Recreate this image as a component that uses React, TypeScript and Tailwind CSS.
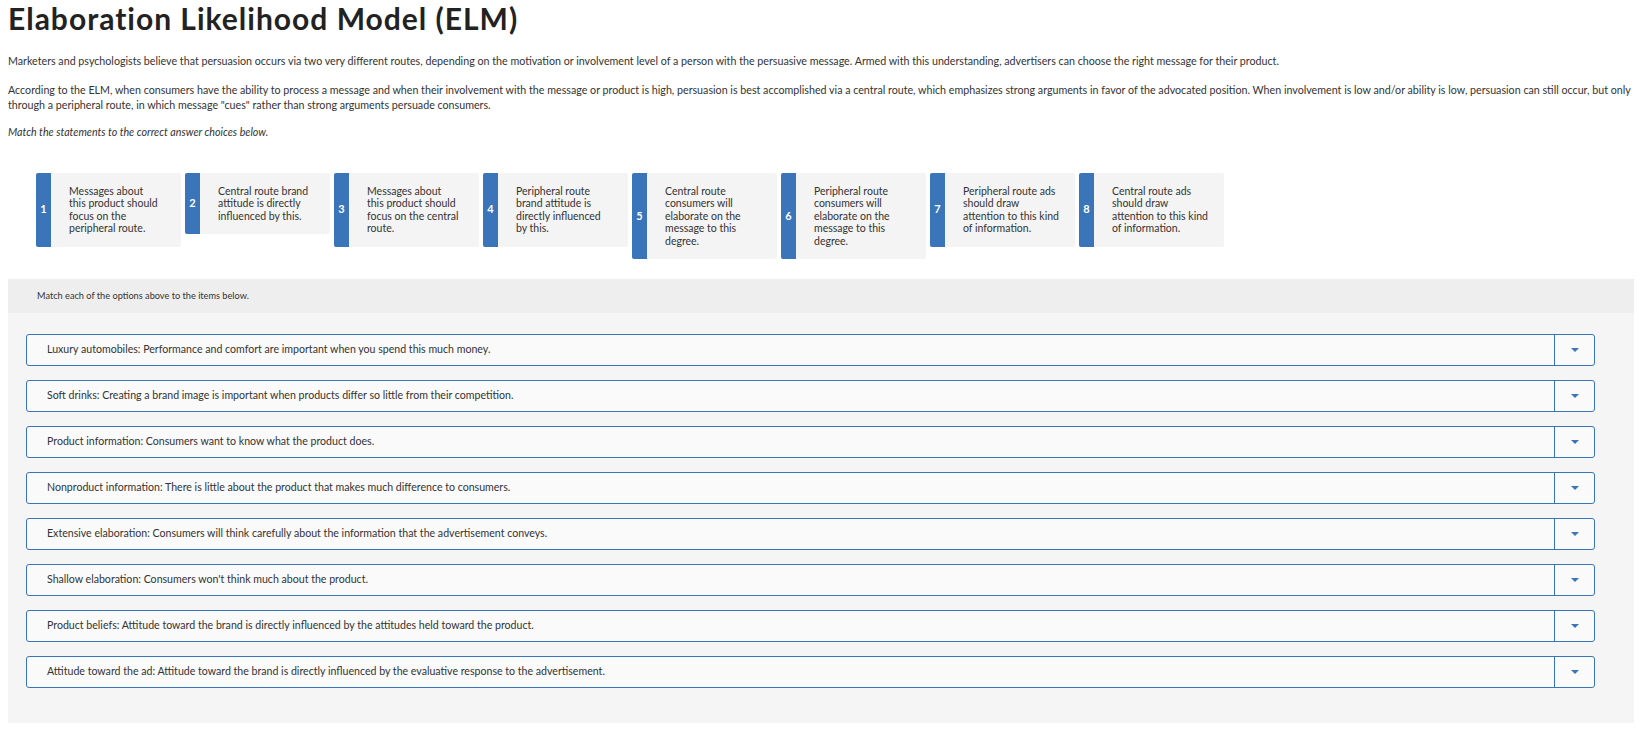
import { useState } from 'react';

const FONT = "font-['Lato','Liberation_Sans',sans-serif]";

// answer choices, broken into the lines shown in each tile
const choices = [
  { n: 1, lines: ['Messages about', 'this product should', 'focus on the', 'peripheral route.'] },
  { n: 2, lines: ['Central route brand', 'attitude is directly', 'influenced by this.'] },
  { n: 3, lines: ['Messages about', 'this product should', 'focus on the central', 'route.'] },
  { n: 4, lines: ['Peripheral route', 'brand attitude is', 'directly influenced', 'by this.'] },
  { n: 5, lines: ['Central route', 'consumers will', 'elaborate on the', 'message to this', 'degree.'] },
  { n: 6, lines: ['Peripheral route', 'consumers will', 'elaborate on the', 'message to this', 'degree.'] },
  { n: 7, lines: ['Peripheral route ads', 'should draw', 'attention to this kind', 'of information.'] },
  { n: 8, lines: ['Central route ads', 'should draw', 'attention to this kind', 'of information.'] },
];

const statements = [
  'Luxury automobiles: Performance and comfort are important when you spend this much money.',
  'Soft drinks: Creating a brand image is important when products differ so little from their competition.',
  'Product information: Consumers want to know what the product does.',
  'Nonproduct information: There is little about the product that makes much difference to consumers.',
  'Extensive elaboration: Consumers will think carefully about the information that the advertisement conveys.',
  "Shallow elaboration: Consumers won't think much about the product.",
  'Product beliefs: Attitude toward the brand is directly influenced by the attitudes held toward the product.',
  'Attitude toward the ad: Attitude toward the brand is directly influenced by the evaluative response to the advertisement.',
];

function ChoiceCard({ n, lines }: { n: number; lines: string[] }) {
  return (
    <div className="flex w-[145px] shrink-0 rounded-[2px] bg-[#f4f4f4]">
      <div className="flex w-[15px] shrink-0 items-center justify-center rounded-l-[2px] bg-[#3a74b9] text-[11px] font-bold text-white">
        {n}
      </div>
      <p className="whitespace-nowrap py-3 pl-[18px] text-[10.5px] leading-[12.5px] text-[#333]">
        {lines.map((l) => (
          <span key={l} className="block">
            {l}
          </span>
        ))}
      </p>
    </div>
  );
}

function MatchRow({ label }: { label: string }) {
  const [open, setOpen] = useState(false);
  return (
    <div className="flex h-[32px] rounded-[3px] border border-[#3a74b9] bg-[#fafafa]">
      <div className="flex flex-1 items-center pl-[20px] text-[10.6px] text-[#333]">{label}</div>
      <button
        type="button"
        onClick={() => setOpen(!open)}
        className="flex w-[40px] items-center justify-center border-l border-[#3a74b9]"
      >
        <span className="h-0 w-0 border-x-[4px] border-t-[4px] border-x-transparent border-t-[#3a74b9]" />
      </button>
    </div>
  );
}

export default function App() {
  return (
    <div className={`${FONT} min-h-screen bg-white px-2 pb-4 text-[#333]`}>
      <h1 className="text-[30px] font-bold leading-[36px] tracking-[1px] text-[#222]">
        Elaboration Likelihood Model (ELM)
      </h1>

      <p className="mt-[18px] text-[10.7px] leading-[14.5px]">
        Marketers and psychologists believe that persuasion occurs via two very different routes, depending on the
        motivation or involvement level of a person with the persuasive message. Armed with this understanding,
        advertisers can choose the right message for their product.
      </p>
      <p className="mt-[14.5px] text-[10.7px] leading-[14.5px]">
        According to the ELM, when consumers have the ability to process a message and when their involvement with the
        message or product is high, persuasion is best accomplished via a central route, which emphasizes strong
        arguments in favor of the advocated position. When involvement is low and/or ability is low, persuasion can
        still occur, but only through a peripheral route, in which message "cues" rather than strong arguments persuade
        consumers.
      </p>
      <p className="mt-[13px] text-[10.7px] italic leading-[14.5px]">
        Match the statements to the correct answer choices below.
      </p>

      <div className="ml-[28px] mt-[33px] flex items-start gap-[4px]">
        {choices.map((c) => (
          <ChoiceCard key={c.n} n={c.n} lines={c.lines} />
        ))}
      </div>

      <div className="mt-[20px] w-[1626px]">
        <div className="flex h-[34px] items-center bg-[#eeeeee] pl-[29px] text-[9.2px] text-[#333]">
          Match each of the options above to the items below.
        </div>
        <div className="flex flex-col gap-[14px] bg-[#f5f5f5] pb-[35px] pl-[18px] pr-[39px] pt-[21px]">
          {statements.map((s) => (
            <MatchRow key={s} label={s} />
          ))}
        </div>
      </div>
    </div>
  );
}
